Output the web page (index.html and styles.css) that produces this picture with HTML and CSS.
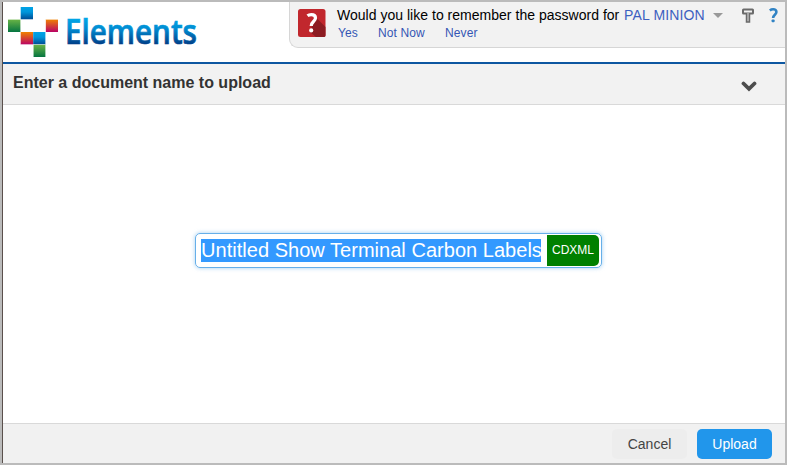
FILE: index.html
```html
<!DOCTYPE html>
<html lang="en">
<head>
<meta charset="utf-8">
<title>Elements</title>
<link rel="stylesheet" href="styles.css">
</head>
<body>
<div class="window">
  <header class="header">
    <svg class="logo" width="210" height="60" viewBox="3 2 210 60" role="img" aria-label="Elements">
      <defs>
        <linearGradient id="blue" x1="0" y1="0" x2="0" y2="1"><stop offset="0" stop-color="#00a3e6"/><stop offset=".4" stop-color="#0096db"/><stop offset="1" stop-color="#004a93"/></linearGradient>
        <linearGradient id="green" x1="0" y1="0" x2="0" y2="1"><stop offset="0" stop-color="#6ab445"/><stop offset="1" stop-color="#057541"/></linearGradient>
        <linearGradient id="red" x1="0" y1="0" x2="0" y2="1"><stop offset="0" stop-color="#f08200"/><stop offset="1" stop-color="#b90265"/></linearGradient>
        <linearGradient id="word" gradientUnits="userSpaceOnUse" x1="0" y1="18" x2="0" y2="45"><stop offset="0" stop-color="#00a8e8"/><stop offset=".4" stop-color="#008cd2"/><stop offset="1" stop-color="#003b84"/></linearGradient>
      </defs>
      <rect x="20.7" y="7" width="12.3" height="12.5" fill="url(#blue)"/>
      <rect x="8" y="19.3" width="12.7" height="12.7" fill="url(#green)"/>
      <rect x="45.7" y="19.3" width="12.3" height="12.7" fill="url(#red)"/>
      <rect x="20.7" y="32" width="12.5" height="12.6" fill="url(#red)"/>
      <rect x="33.2" y="32" width="12.5" height="12.6" fill="url(#blue)"/>
      <rect x="33.2" y="44.6" width="12.5" height="12.4" fill="url(#green)"/>
      <path d="M20.5 19.5h12.500M8 19.500h12.500v12.500M45.500 32V19.500H58M20.500 44.500h25M33.500 44.500V57M45.500 32v25" fill="none" stroke="#fff" stroke-opacity=".45"/>
      <text class="wordmark" x="65" y="44" textLength="132" lengthAdjust="spacingAndGlyphs" fill="url(#word)" stroke="url(#word)" stroke-width=".7">Elements</text>
    </svg>
    <section class="prompt">
      <svg class="badge" width="28" height="29" viewBox="0 0 28 29" aria-hidden="true">
        <rect x="0" y="0" width="27.5" height="28" rx="2.5" fill="#c1272d"/>
        <path d="M17.500 8l10 10v8.500q0 1.500-1.500 1.500h-8l-6-5z" fill="#8c1c22"/>
        <path d="M9.500 6.800Q11 5.600 13.300 5.600c2.700 0 4.200 1.400 4.200 3.500 0 3.500-4.300 3.500-4.300 7.900" fill="none" stroke="#fff" stroke-width="3.200"/>
        <circle cx="13.200" cy="21.400" r="2.100" fill="#fff"/>
      </svg>
      <div class="prompt-text">
        <div class="question"><span class="ask">Would you like to remember the password for</span><a class="user">PAL MINION</a><svg class="caret" width="10" height="5" viewBox="0 0 10 5"><path d="M0 0h10L5 5z" fill="#999"/></svg></div>
        <nav class="choices"><a>Yes</a><a>Not Now</a><a>Never</a></nav>
      </div>
      <svg class="pin" width="12" height="15" viewBox="0 0 12 15"><rect x="1" y="1.500" width="10" height="4" rx=".5" fill="#f2f2f2" stroke="#6b6b6b" stroke-width="2"/><path d="M4.500 5v9h3V5" fill="#bbb" stroke="#6b6b6b" stroke-width="1.500"/></svg>
      <svg class="help" width="9" height="15" viewBox="0 0 9 15"><path d="M.8 2.500Q2.200 1.300 4.200 1.300c2 0 3.200 1 3.200 2.700 0 2.700-3.300 2.700-3.300 6" fill="none" stroke="#3183c4" stroke-width="2.600"/><rect x="2.600" y="11.500" width="3" height="2.800" rx=".8" fill="#3183c4"/></svg>
    </section>
  </header>
  <div class="titlebar">
    <h1>Enter a document name to upload</h1>
    <svg class="chevron" width="16" height="11" viewBox="0 0 16 11"><path d="M2.500 2.500L8 7.800l5.500-5.300" fill="none" stroke="#4d4d4d" stroke-width="3.800" stroke-linecap="round"/></svg>
  </div>
  <main class="content">
    <div class="field"><div class="name"><span>Untitled Show Terminal Carbon Labels</span></div><span class="ext">CDXML</span></div>
  </main>
  <footer class="footer">
    <button class="btn cancel">Cancel</button>
    <button class="btn upload">Upload</button>
  </footer>
</div>
</body>
</html>
```
FILE: styles.css
```css
* { box-sizing: border-box; }
body { margin: 0; background: #bbb; font-family: "Liberation Sans", Arial, sans-serif; }
.window {
  width: 787px;
  height: 465px;
  border: 2px solid #bbb;
  padding-left: 1px;
  display: flex;
  flex-direction: column;
  background: #fff;
  box-shadow: inset 1px 0 #5a504c;
}
.header {
  height: 62px;
  border-bottom: 2px solid #0d57a1;
  display: flex;
  justify-content: space-between;
  align-items: flex-start;
  flex: none;
}
.logo { display: block; overflow: visible; }
.wordmark { font: 600 33.5px "Open Sans", sans-serif; }
.prompt {
  width: 496px;
  height: 46px;
  background: #f2f2f2;
  border: 1px solid #d6d6d6;
  border-width: 0 0 1px 1px;
  border-bottom-left-radius: 9px;
  display: flex;
  align-items: flex-start;
  padding-left: 8px;
}
.badge { margin: 7px 11px 0 0; flex: none; }
.prompt-text { width: 405px; flex: none; }
.question { display: flex; align-items: center; height: 18px; margin-top: 4px; font-size: 14px; line-height: 18px; white-space: nowrap; color: #000; }
.ask { width: 287px; letter-spacing: 0.02px; }
.user { color: #3d5fc0; width: 89px; letter-spacing: 0.15px; }
.caret { margin-top: 1px; }
.choices { display: flex; gap: 20px; font-size: 12px; line-height: 16px; color: #3556b4; margin-top: 1px; padding-left: 1px; letter-spacing: 0.13px; }
.pin { margin: 6px 15px 0 0; flex: none; }
.help { margin-top: 6px; flex: none; }
.titlebar {
  height: 41px;
  background: #f2f2f2;
  border-bottom: 1px solid #d9d9d9;
  display: flex;
  justify-content: space-between;
  align-items: center;
  padding: 0 28px 0 10px;
  flex: none;
}
h1 { margin: 0 0 2px; font-size: 16px; line-height: 20px; color: #333; }
.chevron { margin-top: 4px; }
.content { flex: 1; display: flex; justify-content: center; align-items: flex-start; padding-top: 128px; }
.field {
  width: 407px;
  height: 35px;
  margin-left: 9px;
  border: 1px solid #66afe9;
  border-radius: 5px;
  box-shadow: 0 0 4px rgba(102, 175, 233, .6);
  display: flex;
  justify-content: space-between;
  align-items: center;
  padding: 0 2px 0 5px;
}
.name { width: 340px; height: 23px; background: #3399ff; color: #fff; font-size: 20px; line-height: 23px; white-space: nowrap; letter-spacing: 0.03px; }
.ext { width: 52px; height: 31px; background: #008000; color: #fff; font-size: 12px; line-height: 30px; text-align: center; border-radius: 0 5px 5px 0; }
.footer {
  height: 40px;
  border-top: 1px solid #d9d9d9;
  background: #f1f1f1;
  display: flex;
  justify-content: flex-end;
  gap: 10px;
  padding: 5px 13px 0 0;
  flex: none;
}
.btn { height: 30px; width: 75px; padding: 0; border: 0; border-radius: 5px; font: 14px/30px "Liberation Sans", Arial, sans-serif; }
.cancel { background: #ededed; color: #444; }
.upload { background: #2196eb; color: #fff; }
```
